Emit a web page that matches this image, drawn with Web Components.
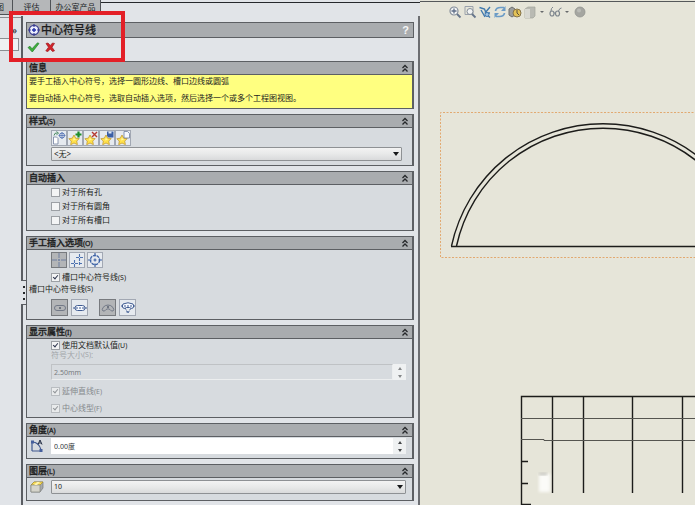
<!DOCTYPE html>
<html lang="zh-CN">
<head>
<meta charset="utf-8">
<title>中心符号线</title>
<style>
  html, body { margin: 0; height: 100%; }
  body {
    --line: #5c5f63; --face: #e1e4e8; --bar: #a9acaf; --body: #d7dbdf; --ink: #1c1d20;
    font: 8px/12px "Noto Sans", "Noto Sans CJK SC", sans-serif;
    color: var(--ink); background: var(--face); overflow: hidden;
  }
</style>
</head>
<body>
<cad-app></cad-app>
<script>
const define = (name, html, setup) => customElements.define(name, class extends HTMLElement {
  connectedCallback() {
    if (this.shadowRoot) return;
    const t = document.createElement('template');
    t.innerHTML = typeof html === 'function' ? html(this) : html;
    this.attachShadow({ mode: 'open' }).append(t.content.cloneNode(true));
    if (setup) setup(this);
  }
});
const key = el => el.getAttribute('key') ? `<small>(${el.getAttribute('key')})</small>` : '';
const star = '<path d="M6 4l1.700 3.200 3.500.4-2.500 2.500.7 3.500-3.400-1.600-3.300 1.700.6-3.600L.8 7.700l3.500-.5z" fill="#ffe14a" stroke="#c39a35" stroke-width=".8"/><path d="M6 6l.8 2.300 2 .3-3.800.8z" fill="#fff7a8"/>';
const icons = {
  center: '<circle cx="7" cy="7" r="4.700" fill="#eef0ff" stroke="#3c3f91" stroke-width="1.300"/><path d="M7 1v3M7 10v3M1 7h3M10 7h3" stroke="#3c3f91" stroke-width="1.200"/><path d="M7 5v4M5 7h4" stroke="#2330a8" stroke-width="1.400"/>',
  ok: '<path d="M2 7.500l2-1.200 2 2.500 5.500-6 1.500.7L6.300 12z" fill="#3fae3c" stroke="#23802a" stroke-width=".7"/>',
  cancel: '<path d="M3 3.500L5 3l2.300 2.500L9.500 3l2 .4L9 7.200l2.500 3.600-2 .7-2.300-2.600L5 11.500l-2.200-.6 2.700-3.700z" fill="#d3232b" stroke="#9e151b" stroke-width=".7"/>',
  apply: '<path d="M1.500 6h3L6 7.500V13H1.500z" fill="#fff" stroke="#7280a0" stroke-width=".8"/><path d="M2 4.500Q2.500 1.500 5 2M4.500 .5l2 1.700-2 1.500" fill="none" stroke="#4a8a62"/><circle cx="10" cy="4.500" r="2.500" fill="none" stroke="#5574b5"/><path d="M10 1v7M6.500 4.500h7" stroke="#5574b5" stroke-width=".8"/>',
  add: star + '<path d="M10.500 .5v6M7.500 3.500h6" stroke="#1d8c2b" stroke-width="2.200"/>',
  del: star + '<path d="M8 1l5 5M13 1L8 6" stroke="#b53a33" stroke-width="1.400"/>',
  save: star + '<path d="M7 .5h6.500v6H8.500L7 5z" fill="#3b5fa5"/><path d="M8.500 .5h3v2h-3z" fill="#dfe8f6"/>',
  load: star + '<path d="M8 .5h3.500l2 2V7H8z" fill="#f4f8ff" stroke="#6d7f9e" stroke-width=".8"/>',
  single: '<path d="M7 0v5M7 6v2M7 9v5M0 7h5M6 7h2M9 7h5" stroke="#6f7f9f"/>',
  linear: '<path d="M9.500 1v12M4.500 7v7M1 10.500h12M6 4.500h7" fill="none" stroke="#4d72b0" stroke-width="1.100" stroke-dasharray="3 1"/>',
  circular: '<circle cx="7" cy="7" r="4.600" fill="none" stroke="#3d62a5" stroke-width="1.300" stroke-dasharray="3 .8"/><path d="M7 0v3.500M7 10.500V14M0 7h3.500M10.500 7H14M7 5.500v3M5.500 7h3" stroke="#3d62a5" stroke-width="1.200"/>',
  slot1: '<rect x="1.500" y="4.500" width="11" height="5" rx="2.500" fill="none" stroke="#727987"/><path d="M7 6v2M6 7h2" stroke="#59606e"/>',
  slot2: '<rect x="2" y="4.500" width="10" height="5" rx="2.500" fill="#f7faff" stroke="#3f5b91"/><path d="M0 7h14" stroke="#3f5b91" stroke-dasharray="2 1"/>',
  arc1: '<path d="M2 10q-1.500-1 0-3.500Q4 4 7 4t5 2.500q1.500 2.500 0 3.500-2 .5-3-1.500-2-1.500-4 0Q4 10.500 2 10z" fill="none" stroke="#727987"/><path d="M7 5v2M6 6h2" stroke="#59606e"/>',
  arc2: '<path d="M2 3q5-2.500 10 0 1.500 2 0 4-2 1-3.500-.5h-3Q4 8 2 7 .5 5 2 3z" fill="#f7faff" stroke="#3f5b91"/><path d="M0 5h14M4 7l3 5 3-5M5.500 11h3" fill="none" stroke="#3f5b91" stroke-dasharray="2 1"/>',
  angle: '<path d="M2 12V3M2 12h9M2 3q7 0 9 8" fill="none" stroke="#40588f" stroke-width="1.200"/><path d="M1 1.500h3v3H1zM9.500 10h3v3h-3z" fill="#455f9c"/><path d="M8 5.500L10 1l2 4.500M9 4h2" fill="none" stroke="#222c43"/>',
  layer: '<path d="M1 5l3-3h9v6l-3 4H1z" fill="#a7a9ab" stroke="#77797b" stroke-width=".7"/><path d="M1 5l3-3h9l-3 3z" fill="#ffe25a" stroke="#a88e2a" stroke-width=".7"/><path d="M1 5h9v7H1z" fill="#d5d4cb" stroke="#85867f" stroke-width=".7"/><path d="M7 2h3L7 5H4z" fill="#fff3ab"/>',
  zoomfit: '<circle cx="6" cy="6" r="4" fill="#f2f4f4" stroke="#848d99" stroke-width="1.200"/><path d="M9 9l3.500 3.500" stroke="#66758b" stroke-width="1.800"/><path d="M6 3.500v5M3.500 6h5" stroke="#5f6e88" stroke-width="1.300"/>',
  zoomarea: '<path d="M2 1.500h8v8H2z" fill="none" stroke="#9aa1aa"/><circle cx="7" cy="6.500" r="3" fill="#f2f4f4" stroke="#848d99"/><path d="M9 9l3.500 3.500" stroke="#66758b" stroke-width="1.800"/>',
  rotate: '<path d="M1.500 2.500l5 1.500 1.500 4M12 2L7 8M3 5l4 7M7 8h5M7 8l5 4.500" fill="none" stroke="#4179ad" stroke-width="1.400"/><circle cx="9" cy="9.500" r="2" fill="#9fc3e4" stroke="#4179ad"/>',
  refresh: '<path d="M2.500 6Q3 2.500 7.500 2.500H11M11.500 8q-.5 3.500-5 3.500H3" fill="none" stroke="#6b9bc6" stroke-width="1.700"/><path d="M12.500 1v5H8zM1.500 13V8H6z" fill="#6b9bc6"/>',
  appearance: '<path d="M1 4l3-2 3 2v6l-3 2-3-2z" fill="#9b9d9d" stroke="#6c6e70"/><circle cx="9" cy="8" r="4" fill="#e3c256" stroke="#84734c"/><path d="M9 5v3l2 2" fill="none" stroke="#5a4e38"/>',
  cube: '<path d="M2 4l3-2h7v9l-2 2H2z" fill="#b9bab3" stroke="#a1a39b" stroke-width=".7"/><path d="M2 4h5v9H2z" fill="#d9d9d2"/>',
  glasses: '<ellipse cx="4" cy="8.500" rx="2" ry="2.500" fill="none" stroke="#7d858d" stroke-width="1.200"/><ellipse cx="9.500" cy="8.500" rx="2" ry="2.500" fill="none" stroke="#7d858d" stroke-width="1.200"/><path d="M3 6q0-3 2-4M10.500 6q1-3 3-3M6 8h1.500" fill="none" stroke="#7d858d"/>',
  ball: '<circle cx="7" cy="7" r="5" fill="#a5a6a1" stroke="#92948f" stroke-width=".8"/><circle cx="6" cy="5.500" r="2" fill="#bbbcb7"/>'
};

define('ui-icon', el => `<style>:host{display:block;width:14px;height:14px}svg{display:block}</style>
<svg width="14" height="14" viewBox="0 0 14 14" aria-hidden="true">${icons[el.getAttribute('name')]}</svg>`);

define('tool-button', el => `<style>
:host{display:block}
button{display:grid;place-items:center;box-sizing:border-box;width:16px;height:16px;padding:0;border:1px solid #a2a8b3;background:#e6eaef;overflow:hidden}
button.flat{border:0;background:none;width:15px}
button[aria-pressed=true]{border-color:#777a7e;background:#b3b5b7}
:host([wide]) button{width:17px;height:17px}
</style><button type="button" title="${el.getAttribute('name')}" class="${el.hasAttribute('flat') ? 'flat' : ''}" ${el.hasAttribute('pressed') ? 'aria-pressed="true"' : ''}><ui-icon name="${el.getAttribute('name')}"></ui-icon></button>`);

define('ui-group', el => `<style>
:host{display:block;border:1px solid var(--line);border-right-width:2px;background:var(--body)}
header{display:flex;align-items:center;justify-content:space-between;height:12px;padding:0 3px 0 2px;background:var(--bar);border-bottom:1px solid var(--line)}
h2{margin:0;font-size:9px;line-height:12px;font-weight:500;-webkit-text-stroke:.3px}
small{font-size:7px;font-weight:400}
button{padding:0;border:0;background:none;width:8px;height:10px}
svg{display:block}
</style><header><h2>${el.getAttribute('label')}${key(el)}</h2>
<button type="button" aria-label="collapse"><svg width="8" height="10" viewBox="0 0 8 10"><path d="M1.500 5L4 2.500 6.500 5M1.500 8.500L4 6l2.500 2.500" fill="none" stroke="#26282b" stroke-width="1.300"/></svg></button></header><slot></slot>`);

define('ui-check', el => `<style>
:host{display:block}
label{display:flex;align-items:center;gap:2px;height:14px}
:host([compact]) label{height:12px}
input{appearance:none;margin:0;width:9px;height:9px;border:1px solid #9ca0a5;background:#f3f4f5;display:grid;box-sizing:border-box}
input:checked::after{content:"";width:2px;height:4px;margin:0 2px;border:solid #30384f;border-width:0 1px 1px 0;transform:rotate(40deg)}
input:disabled{border-color:#b9bdc1;background:#e9ebec}
input:disabled::after{border-color:#92969a}
input:disabled + span{color:#85898d}
small{font-size:7px}
</style><label><input type="checkbox" ${el.hasAttribute('checked') ? 'checked' : ''} ${el.hasAttribute('disabled') ? 'disabled' : ''}><span>${el.getAttribute('label')}${key(el)}</span></label>`);

define('ui-select', el => `<style>
:host{display:grid;align-items:center}
select,svg{grid-area:1/1}
select{appearance:none;box-sizing:border-box;width:100%;height:14px;margin:0;padding:0 14px 0 2px;border:1px solid #8e9194;border-radius:1px;background:linear-gradient(#f3f3f3,#e8e9e9 50%,#d9dadb);font:inherit;font-size:${el.getAttribute('size') || 8}px;line-height:12px;color:inherit}
svg{justify-self:end;margin-right:3px;pointer-events:none}
</style><select aria-label="${el.getAttribute('label')}"><option>${el.getAttribute('value')}</option></select>
<svg width="6" height="4"><path d="M0 0h6L3 4z" fill="#17181a"/></svg>`);

define('spin-field', el => `<style>
:host{display:flex}
input{flex:1;min-width:0;box-sizing:border-box;height:16px;margin:0;padding:0 2px;border:1px solid #fff;background:#fff;font:inherit;font-size:7px;color:#33363a}
input:disabled{border-color:#bfc2c5 #eceeef #eceeef #bfc2c5;background:var(--body);color:#777b7f}
div{display:grid;width:13px;background:#eff1f2}
button{display:grid;place-items:center;padding:0;border:0;background:none;height:8px}
path{fill:${el.hasAttribute('disabled') ? '#858789' : '#444649'}}
</style><input aria-label="${el.getAttribute('label')}" value="${el.getAttribute('value')}" ${el.hasAttribute('disabled') ? 'disabled' : ''}>
<div><button type="button" aria-label="+"><svg width="4" height="3"><path d="M0 3h4L2 0z"/></svg></button><button type="button" aria-label="-"><svg width="4" height="3"><path d="M0 0h4L2 3z"/></svg></button></div>`);

define('tab-strip', `<style>
:host{display:flex;height:16px;overflow:hidden}
nav{display:grid;grid-template-columns:13px 38px 50px;background:#b7b9bb;height:15px}
button{padding:0;border:solid #4f5256;border-width:0 1px 1px 0;background:#b5b7b9;font:inherit;color:#222427;line-height:14px;text-align:center;white-space:nowrap;overflow:hidden}
i{flex:1;margin-top:2px;border-top:1px solid #25282c}
button:first-child{direction:rtl;padding-right:8px}
</style><nav><button type="button">图</button><button type="button">评估</button><button type="button">办公室产品</button></nav><i></i>`);

define('side-gutter', `<style>
:host{display:flex;flex-direction:column;border-top:1px solid #8a8d92;margin-top:1px}
button{align-self:end;margin:6px 4px 3px;padding:0;border:0;background:none;font:inherit;font-size:11px;line-height:11px;color:#26282b}
input{appearance:none;box-sizing:border-box;width:19px;height:13px;margin:0;border:1px solid #8b8e92;border-left:0;background:#eff1f3}
</style><button type="button">»</button><input aria-label="search">`);

define('property-panel', `<style>
:host{display:block;position:relative;min-width:0;box-sizing:border-box;border-left:2px solid #5a5d62;border-right:2px solid #6c6e72;padding:6px 4px 0 3px}
.title{display:flex;align-items:center;height:14px;padding:0 4px 0 0;border:1px solid var(--line);background:var(--bar)}
h1{flex:1;margin:0;font-size:11px;line-height:14px;font-weight:500;-webkit-text-stroke:.2px}
.title button,.actions button{padding:0;border:0;background:none;font:bold 11px/12px "Liberation Sans",sans-serif;color:#f5f6f7}
.actions{display:flex;gap:3px;height:19px;padding:2px 0}
.actions button{display:grid;place-items:center;width:14px;height:14px}
.stack{display:grid;gap:5px}
.note{display:grid;gap:5px;background:#ffff80;padding:0 2px 4px}
p{margin:0;line-height:12px}
.in{padding:2px 6px 4px 24px}
.row{display:flex}
.gap{gap:2px}
.wide{margin-right:8px}
.cap{display:flex;align-items:center;height:10px;line-height:10px}
.cap.muted{height:8px;line-height:8px}
small{font-size:7px}
.muted{color:#a2a6aa}
.field{display:grid;grid-template-columns:24px 1fr;align-items:center;padding:2px 6px 4px 0}
.field ui-icon{margin-left:3px}
.grip{position:absolute;left:-2px;top:264px;width:5px;height:23px;border:solid #5a5d62;border-width:1px 1px 1px 0;background:var(--face);display:grid;place-content:center;gap:4px}
.grip i{width:2px;height:2px;background:#25272a}
</style>
<div class="title"><ui-icon name="center"></ui-icon><h1>中心符号线</h1><button type="button">?</button></div>
<div class="actions"><button type="button" aria-label="OK"><ui-icon name="ok"></ui-icon></button><button type="button" aria-label="Cancel"><ui-icon name="cancel"></ui-icon></button></div>
<div class="stack">
<ui-group label="信息"><div class="note"><p>要手工插入中心符号，选择一圆形边线、槽口边线或圆弧</p><p>要自动插入中心符号，选取自动插入选项，然后选择一个或多个工程图视图。</p></div></ui-group>
<ui-group label="样式" key="S"><div class="in" style="padding-right:10px"><div class="row" style="margin-bottom:1px"><tool-button name="apply"></tool-button><tool-button name="add"></tool-button><tool-button name="del"></tool-button><tool-button name="save"></tool-button><tool-button name="load"></tool-button></div><ui-select label="样式" value="&amp;lt;无&amp;gt;"></ui-select></div></ui-group>
<ui-group label="自动插入"><div class="in" style="padding-top:0;padding-bottom:3px"><ui-check label="对于所有孔"></ui-check><ui-check label="对于所有圆角"></ui-check><ui-check label="对于所有槽口"></ui-check></div></ui-group>
<ui-group label="手工插入选项" key="O"><div class="in" style="padding-bottom:2px"><div class="row gap"><tool-button name="single" pressed></tool-button><tool-button name="linear"></tool-button><tool-button name="circular"></tool-button></div></div>
<div class="in" style="padding-top:0;padding-bottom:0"><ui-check checked label="槽口中心符号线" key="S"></ui-check></div>
<span class="cap" style="padding-left:2px">槽口中心符号线<small>(S)</small></span>
<div class="in" style="padding-top:5px;padding-bottom:3px"><div class="row" style="gap:3px"><tool-button wide name="slot1" pressed></tool-button><tool-button class="wide" wide name="slot2"></tool-button><tool-button wide name="arc1" pressed></tool-button><tool-button wide name="arc2"></tool-button></div></div></ui-group>
<ui-group label="显示属性" key="I"><div class="in" style="padding-top:0;padding-bottom:2px"><ui-check compact checked label="使用文档默认值" key="U"></ui-check><span class="cap muted">符号大小<small>(S)</small>:</span><spin-field style="margin:5px 0 4px" disabled label="符号大小" value="2.50mm"></spin-field><ui-check checked disabled label="延伸直线" key="E"></ui-check><ui-check style="margin-top:3px" checked disabled label="中心线型" key="F"></ui-check></div></ui-group>
<ui-group label="角度" key="A"><div class="field" style="padding-top:1px"><ui-icon name="angle"></ui-icon><spin-field label="角度" value="0.00度"></spin-field></div></ui-group>
<ui-group label="图层" key="L"><div class="field" style="padding-bottom:6px"><ui-icon name="layer"></ui-icon><ui-select label="图层" value="10" size="7"></ui-select></div></ui-group>
</div>
<div class="grip"><i></i><i></i><i></i></div>`);

define('drawing-view', `<style>
:host{display:block;position:relative;min-width:0;background:#e6e5d9;overflow:hidden}
.rule{height:1px;margin-top:1px;background:#55585a}
.bar{display:flex;align-items:center;padding:2px 26px 0 27px}
.bar b{width:10px;display:grid;place-items:center}
.bar b::after{content:"";border:solid transparent;border-width:2px 2px 0;border-top-color:#66696b}
.scene{position:absolute;inset:0;width:100%;height:100%;pointer-events:none}
</style>
<div class="rule"></div>
<div class="bar"><tool-button flat name="zoomfit"></tool-button><tool-button flat name="zoomarea"></tool-button><tool-button flat name="rotate"></tool-button><tool-button flat name="refresh"></tool-button><tool-button flat name="appearance"></tool-button><tool-button flat name="cube"></tool-button><b></b><tool-button flat name="glasses"></tool-button><b></b><tool-button flat name="ball"></tool-button></div>
<svg class="scene">
<defs><filter id="soft"><feGaussianBlur stdDeviation="1.500"/></filter></defs>
<g transform="translate(-420 0)">
<path d="M900 112.500H440.500V257.500H900" fill="none" stroke="#e2a970" stroke-dasharray="2 1.500"/>
<g fill="none" stroke="#1c1c1a" stroke-width="1.400">
<path d="M451.500 246A155 155 0 0 1 754.500 246M456.500 246A150 150 0 0 1 749.500 246"/><path d="M451 246.500H755"/>
<path d="M521.500 505V396.500H900M552.500 396V493M583.500 396V493M632.500 396V493M682.500 396V493M521 461.500h7M521 483.500h7M521 504.500h10"/>
<path d="M521 418.500H900M521 439.500h23v1H900" stroke="#555550" stroke-width="1"/></g>
<path d="M539 474h11v18h-11z" fill="#fbfbf8" filter="url(#soft)"/><path d="M539 473h8v2h-8z" fill="#b9b9b2" filter="url(#soft)"/>
</g></svg>`);

define('cad-app', `<style>
:host{display:grid;grid-template-columns:84fr 55fr;min-height:100vh;position:relative;overflow:hidden}
.left{display:grid;grid-template:16px 1fr / 21px minmax(0,1fr);min-width:0}
tab-strip{grid-column:1/-1}
.mark{position:absolute;left:9px;top:11px;width:108px;height:43px;border:4px solid #e31f27;pointer-events:none}
</style>
<div class="left"><tab-strip></tab-strip><side-gutter></side-gutter><property-panel></property-panel></div>
<drawing-view></drawing-view><div class="mark"></div>`);
</script>
</body>
</html>
